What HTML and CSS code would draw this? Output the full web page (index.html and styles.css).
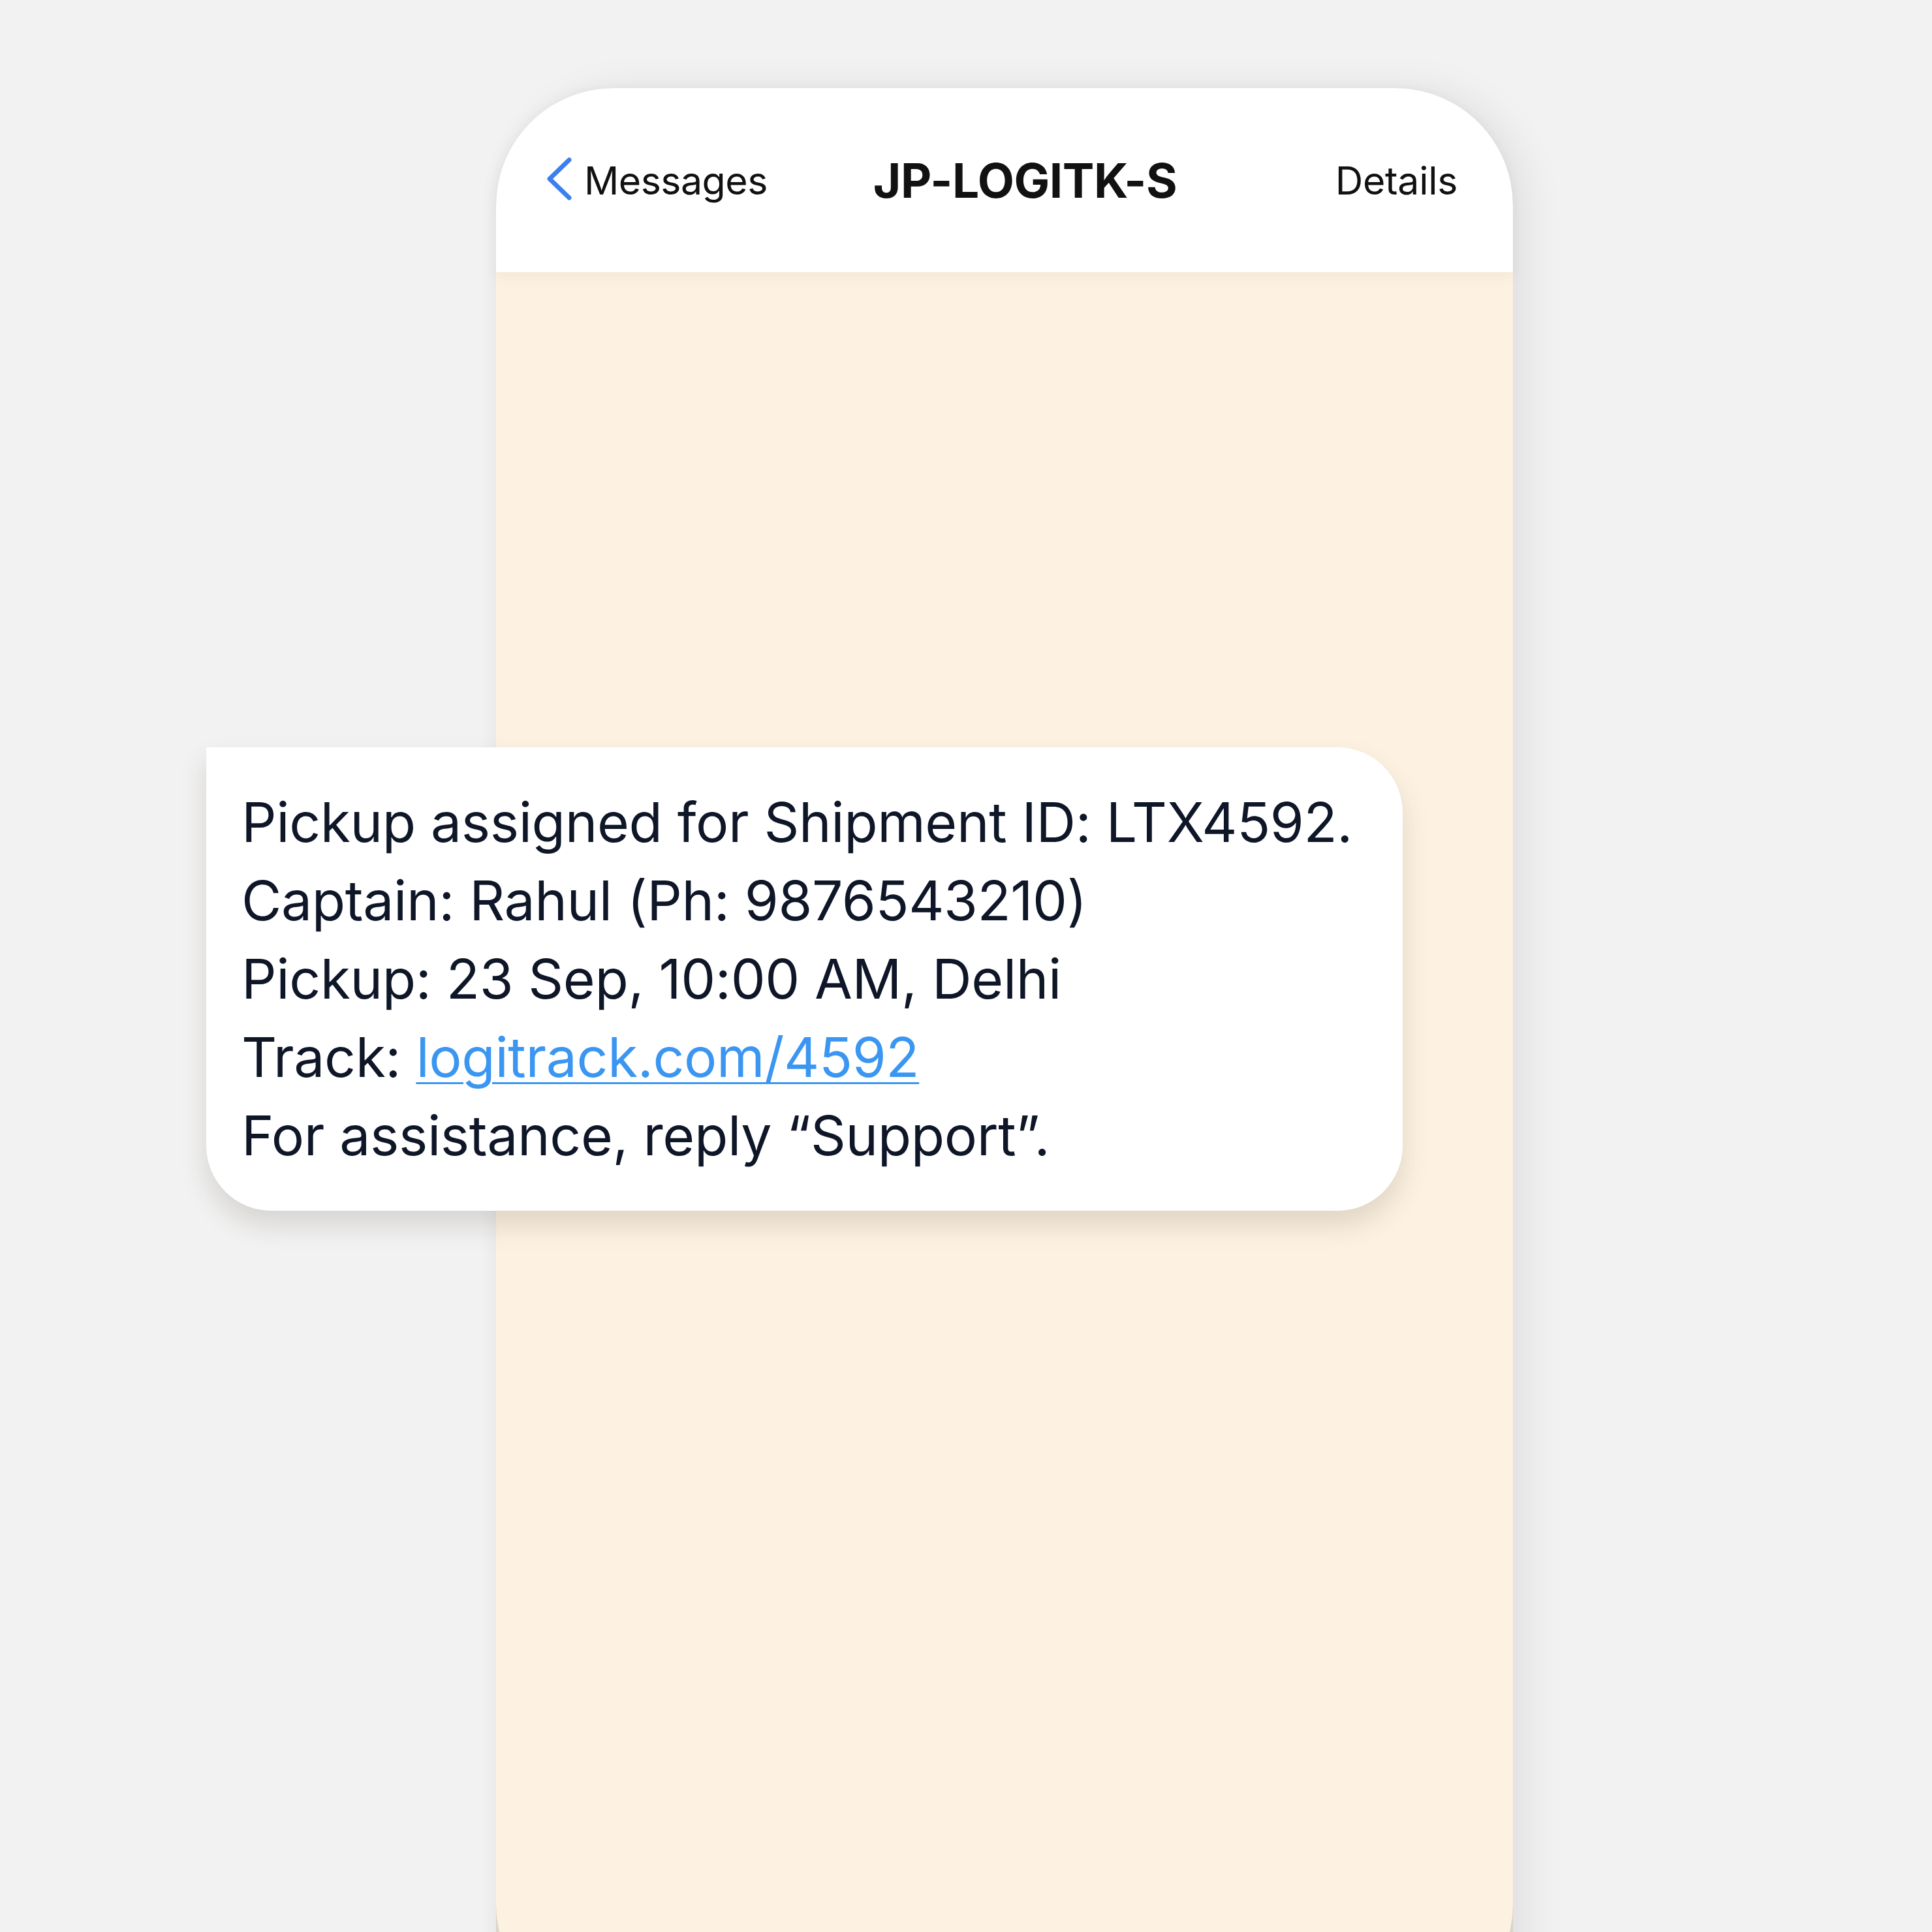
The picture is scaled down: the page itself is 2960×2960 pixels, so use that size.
FILE: index.html
```html
<!DOCTYPE html>
<html lang="en">
<head>
<meta charset="utf-8">
<title>JP-LOGITK-S</title>
<link rel="stylesheet" href="styles.css">
</head>
<body>
<div class="stage">
  <div class="phone">
    <div class="header">
      <div class="back">
        <svg class="chev" width="44" height="72" viewBox="0 0 44 72"><polyline points="37,7 7,36 37,65" fill="none" stroke="#3b7ff0" stroke-width="7" stroke-linecap="round" stroke-linejoin="round"/></svg>
        <span class="back-label">Messages</span>
      </div>
      <div class="title">JP-LOGITK-S</div>
      <div class="details">Details</div>
    </div>
    <div class="screen"></div>
  </div>
  <div class="bubble">
    <p class="line">Pickup assigned for Shipment ID: LTX4592.</p>
    <p class="line">Captain: Rahul (Ph: 9876543210)</p>
    <p class="line">Pickup: 23 Sep, 10:00 AM, Delhi</p>
    <p class="line">Track: <a class="link" href="#">logitrack.com/4592</a></p>
    <p class="line">For assistance, reply “Support”.</p>
  </div>
</div>
</body>
</html>
```

FILE: styles.css
```css
html, body {
  margin: 0;
  padding: 0;
  background: #f2f2f2;
}
.stage {
  position: relative;
  width: 2960px;
  height: 2960px;
  overflow: hidden;
  padding: 135px 0 0 760px;
  box-sizing: border-box;
  font-family: "Inter", "Noto Sans", sans-serif;
}
.phone {
  width: 1558px;
  height: 2962px;
  border-radius: 180px 180px 0 0;
  background: #dcd4c9;
  display: flex;
  flex-direction: column;
  box-shadow: 24px 0 60px rgba(0,0,0,0.07), -6px 0 24px rgba(0,0,0,0.03);
}
.header {
  height: 282px;
  flex: none;
  background: #ffffff;
  border-radius: 180px 180px 0 0;
  display: flex;
  align-items: center;
  padding: 0 85px 0 75px;
  box-sizing: border-box;
  position: relative;
  z-index: 1;
  box-shadow: 0 8px 18px rgba(120, 95, 50, 0.07);
  color: #111111;
}
.back {
  display: flex;
  align-items: center;
  gap: 16px;
}
.chev {
  display: block;
  margin-top: -4px;
}
.back-label {
  font-size: 59px;
  font-weight: 400;
  letter-spacing: -0.5px;
}
.title {
  margin-left: 162px;
  font-size: 73px;
  font-weight: 700;
  letter-spacing: -0.5px;
}
.details {
  margin-left: auto;
  font-size: 59px;
  font-weight: 400;
  letter-spacing: -0.3px;
}
.screen {
  flex: 1;
  background: #fdf2e2;
  border-radius: 0 0 180px 180px;
}
.bubble {
  position: absolute;
  left: 316px;
  top: 1145px;
  width: 1833px;
  height: 710px;
  box-sizing: border-box;
  padding: 55px 30px 55px 54px;
  background: #ffffff;
  border-radius: 0 100px 100px 100px;
  box-shadow: 0 22px 40px rgba(60, 50, 30, 0.15);
  color: #0e1628;
}
.line {
  margin: 0;
  font-size: 84px;
  line-height: 120px;
  white-space: nowrap;
  letter-spacing: -0.4px;
}
.link {
  color: #3b96f2;
  text-decoration: underline;
  text-decoration-thickness: 3px;
  text-underline-offset: 8px;
}
```
